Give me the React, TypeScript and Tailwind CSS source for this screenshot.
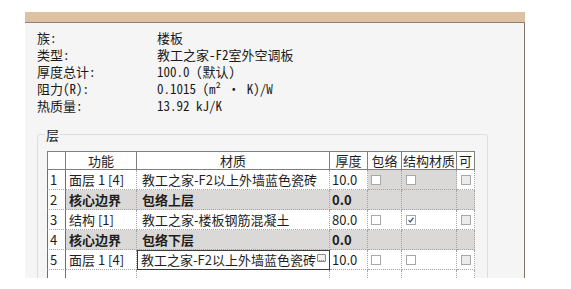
import React from "react";

/* ── data ───────────────────────────────────────────────────────── */

const INFO: readonly [string, string][] = [
  ["族:", "楼板"],
  ["类型:", "教工之家-F2室外空调板"],
  ["厚度总计:", "100.0 (默认)"],
  ["阻力(R):", "0.1015 (m² · K)/W"],
  ["热质量:", "13.92 kJ/K"],
];

interface Layer {
  func: string;
  material: string;
  thickness: string;
  core?: boolean;
  structural?: boolean;
  editing?: boolean;
  grayChecks?: boolean;
}

const LAYERS: readonly Layer[] = [
  { func: "面层 1 [4]", material: "教工之家-F2以上外墙蓝色瓷砖", thickness: "10.0", grayChecks: true },
  { func: "核心边界", material: "包络上层", thickness: "0.0", core: true },
  { func: "结构 [1]", material: "教工之家-楼板钢筋混凝土", thickness: "80.0", structural: true },
  { func: "核心边界", material: "包络下层", thickness: "0.0", core: true },
  { func: "面层 1 [4]", material: "教工之家-F2以上外墙蓝色瓷砖", thickness: "10.0", editing: true },
];

const COLS = "grid grid-cols-[19px_71px_193px_38px_34px_55px_18px]";
const CELL = "h-[20px] border-r border-b border-dotted border-[#a3a3a3] overflow-hidden whitespace-nowrap leading-[19px]";
const NUM_CELL = "h-[20px] border-x border-b border-[#6f6f6f] [border-bottom-style:dotted] [border-bottom-color:#a3a3a3] bg-white overflow-hidden leading-[19px] pl-[2px]";
const HEAD = "h-[19px] border-r border-b border-t border-[#7f7f7f] bg-white text-center leading-[17px] overflow-hidden whitespace-nowrap";

/* ── pieces ─────────────────────────────────────────────────────── */

function Check({ checked = false, gray = false }: { checked?: boolean; gray?: boolean }) {
  return (
    <span
      className={`mt-[5px] block h-[10px] w-[10px] border border-[#a8a8a8] ${gray ? "bg-[#ececec]" : "bg-white"}`}
    >
      {checked && (
        <svg viewBox="0 0 10 10" className="h-full w-full" aria-hidden="true">
          <path d="M2 5.2 L4 7.4 L8 2.2" fill="none" stroke="#3a58a0" strokeWidth="1.6" />
        </svg>
      )}
    </span>
  );
}

function LayerRow({ n, layer }: { n: number; layer: Layer }) {
  const rowBg = layer.core ? "bg-[#dad9d7]" : "bg-white";
  const checkBg = layer.core || layer.grayChecks ? "bg-[#dad9d7]" : "bg-white";
  const weight = layer.core ? "font-bold" : "";
  return (
    <>
      <div className={NUM_CELL}>{n}</div>
      <div className={`${CELL} ${rowBg} ${weight} pl-[3px]`}>{layer.func}</div>
      {layer.editing ? (
        <div className="relative h-[20px] border border-[#3c3c3c] bg-white pl-[3px] leading-[18px] whitespace-nowrap">
          {layer.material}
          <span className="absolute right-[3px] top-[3px] flex h-[8px] w-[9px] items-end justify-center rounded-[1px] border border-[#8a8a8a] bg-[#f2f2f2] text-[7px] leading-[5px] text-[#555]">
            ...
          </span>
        </div>
      ) : (
        <div className={`${CELL} ${rowBg} ${weight} pl-[5px]`}>{layer.material}</div>
      )}
      <div className={`${CELL} ${rowBg} ${weight} pl-[2px]`}>{layer.thickness}</div>
      <div className={`${CELL} ${checkBg} pl-[3px]`}>{!layer.core && <Check />}</div>
      <div className={`${CELL} ${checkBg} pl-[4px]`}>
        {!layer.core && <Check checked={layer.structural} />}
      </div>
      <div className={`${CELL} ${rowBg} pl-[4px]`}>{!layer.core && <Check gray />}</div>
    </>
  );
}

function LayerTable() {
  return (
    <div
      className={`${COLS} w-[428px] text-[13px] text-[#1e1e1e]`}
      style={{ fontFamily: '"Noto Sans CJK SC", "Liberation Sans", sans-serif' }}
    >
      <div className={`${HEAD} border-l`} />
      <div className={HEAD}>功能</div>
      <div className={HEAD}>材质</div>
      <div className={HEAD}>厚度</div>
      <div className={HEAD}>包络</div>
      <div className={HEAD}>结构材质</div>
      <div className={HEAD}>可</div>
      {LAYERS.map((layer, i) => (
        <LayerRow key={i} n={i + 1} layer={layer} />
      ))}
      <div className={NUM_CELL} />
      <div className={`${CELL} bg-white`} />
      <div className={`${CELL} bg-white`} />
      <div className={`${CELL} bg-white`} />
      <div className={`${CELL} bg-white`} />
      <div className={`${CELL} bg-white`} />
      <div className={`${CELL} bg-white`} />
    </div>
  );
}

/* ── app ────────────────────────────────────────────────────────── */

export default function App() {
  return (
    <div className="h-[289px] w-[571px] overflow-hidden bg-white pl-[25px] pt-[12px]">
      <div className="flex h-[266px] w-[500px] flex-col overflow-hidden border-t-[10px] border-[#dcc2a3]">
        <div className="h-px shrink-0 bg-[#8d8174]" />
        <div
          className="flex-1 overflow-hidden border-r border-[#7b7268] bg-[#f5f5f5] pl-[12px] pt-[6px] text-[13px] text-[#1a1a1a]"
          style={{ fontFamily: '"Noto Sans Mono CJK SC", "Noto Sans CJK SC", monospace' }}
        >
          <div className="grid grid-cols-[120px_auto]">
            {INFO.map(([k, v]) => (
              <React.Fragment key={k}>
                <div className="h-[17px] leading-[17px]">{k}</div>
                <div className="h-[17px] leading-[17px] whitespace-nowrap">{v}</div>
              </React.Fragment>
            ))}
          </div>
          <div className="relative mt-[20px] h-[200px] w-[451px] rounded-[3px] border border-[#dedede] pl-[9px] pt-[16px]">
            <span
              className="absolute -top-[9px] left-[7px] bg-[#f5f5f5] px-[1px] leading-[17px]"
              style={{ fontFamily: '"Noto Sans CJK SC", sans-serif' }}
            >
              层
            </span>
            <LayerTable />
          </div>
        </div>
      </div>
    </div>
  );
}
